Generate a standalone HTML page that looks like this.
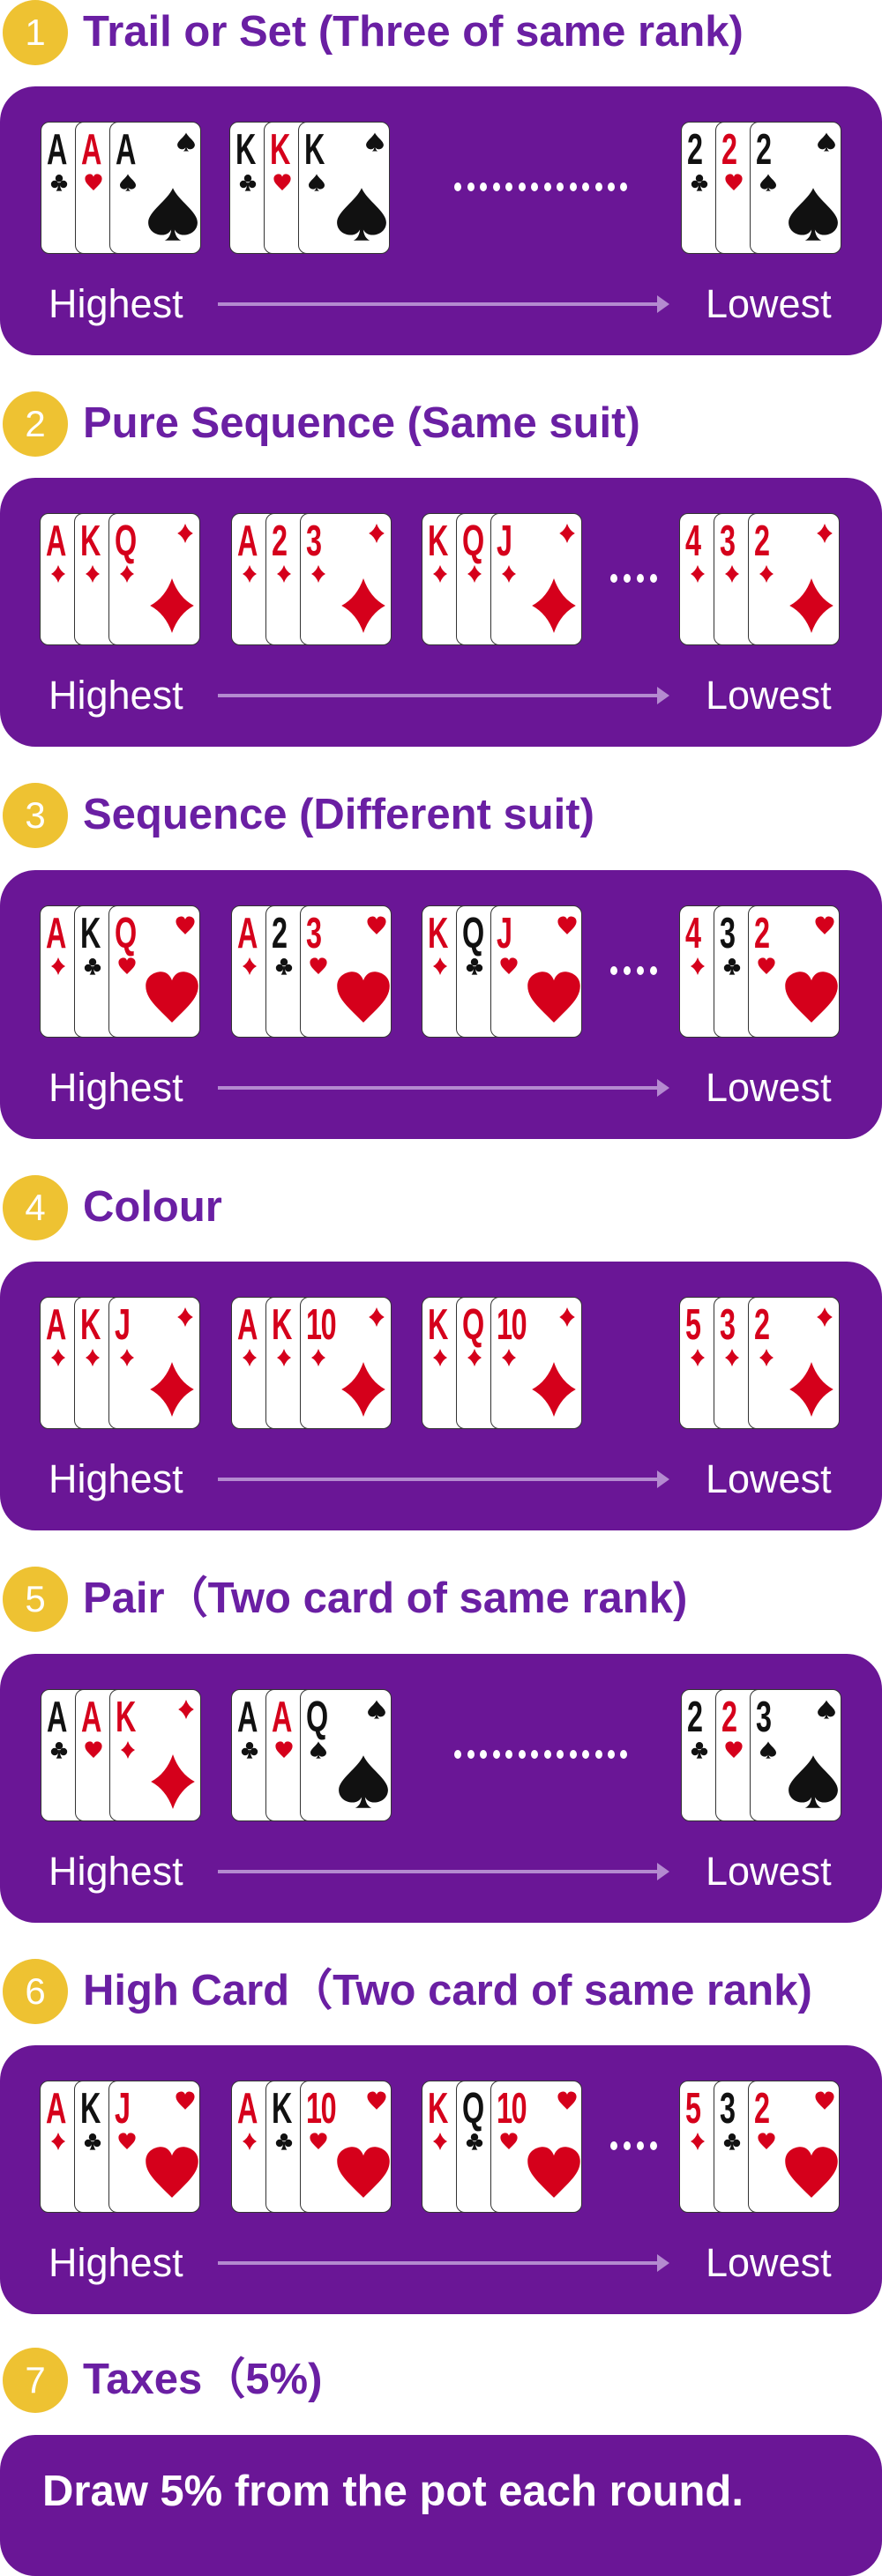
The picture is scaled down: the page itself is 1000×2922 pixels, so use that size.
<!DOCTYPE html>
<html><head><meta charset="utf-8">
<style>
*{margin:0;padding:0}
body{width:1000px;height:2882px;background:#fff;position:relative;overflow:hidden;font-family:"Liberation Sans",sans-serif}
.num{position:absolute;left:3px;width:74px;height:74px;border-radius:50%;background:#eec232;color:#fff;font-size:42px;line-height:74px;text-align:center}
.tt{position:absolute;left:94px;font-size:49px;font-weight:bold;line-height:56px;color:#6a1fa3;white-space:nowrap}
.box{position:absolute;left:0;width:1000px;height:305px;border-radius:40px;background:#6a1696}
.hi{position:absolute;left:55px;top:222px;font-size:45px;line-height:50px;color:#fff}
.lo{position:absolute;left:800px;top:222px;font-size:45px;line-height:50px;color:#fff}
.ar{position:absolute;left:247px;top:245px;width:500px;height:4px;background:#b48ad0}
.ar:after{content:"";position:absolute;left:498px;top:-8px;border-left:14px solid #b48ad0;border-top:10px solid transparent;border-bottom:10px solid transparent}
.g{position:absolute;top:40px;width:182px;height:150px}
.c{position:absolute;top:0;width:104px;height:150px;background:#fff;border:1px solid #333;border-radius:10px;box-sizing:border-box;color:#111}
.c:nth-child(2){left:39px}.c:nth-child(3){left:78px}
.red{color:#d5001b}
.r{position:absolute;left:6px;top:2px;font:bold 49px/58px "Liberation Sans",sans-serif;transform:scaleX(0.66);transform-origin:0 0;letter-spacing:-2px;white-space:nowrap}
.ss{position:absolute;left:10px;top:58px;width:20px;height:20px}
.tr{position:absolute;left:75px;top:10px;width:22px;height:24px}
.bg{position:absolute;left:40px;top:70px;width:62px;height:68px}
svg{fill:currentColor}
.dot{position:absolute;width:8px;height:10px;border-radius:50%;background:#fff}
</style></head><body>
<svg width="0" height="0" style="position:absolute">
<defs>
<symbol id="d" viewBox="0 0 100 100"><path d="M50 0Q62 35 90 50Q62 65 50 100Q38 65 10 50Q38 35 50 0Z"/></symbol>
<symbol id="h" viewBox="0 0 100 100"><path d="M50 95C20 65 2 50 2 28C2 10 18 2 30 2C40 2 47 9 50 18C53 9 60 2 70 2C82 2 98 10 98 28C98 50 80 65 50 95Z"/></symbol>
<symbol id="s" viewBox="0 0 100 100"><path d="M50 2C40 25 5 45 5 65C5 80 18 88 30 88C38 88 44 84 47 78C46 88 42 95 35 98L65 98C58 95 54 88 53 78C56 84 62 88 70 88C82 88 95 80 95 65C95 45 60 25 50 2Z"/></symbol>
<symbol id="c" viewBox="0 0 100 100"><circle cx="50" cy="26" r="21"/><circle cx="25" cy="60" r="21"/><circle cx="75" cy="60" r="21"/><path d="M46 50Q45 85 33 98L67 98Q55 85 54 50Z"/></symbol>
</defs></svg>

<!-- 1 -->
<div class="num" style="top:0">1</div>
<div class="tt" style="top:8px">Trail or Set (Three of same rank)</div>
<div class="box" style="top:98px">
<div class="g" style="left:46px">
<div class="c"><span class="r">A</span><svg class="ss"><use href="#c"/></svg></div>
<div class="c red"><span class="r">A</span><svg class="ss"><use href="#h"/></svg></div>
<div class="c"><span class="r">A</span><svg class="ss"><use href="#s"/></svg><svg class="tr"><use href="#s"/></svg><svg class="bg"><use href="#s"/></svg></div>
</div>
<div class="g" style="left:260px">
<div class="c"><span class="r">K</span><svg class="ss"><use href="#c"/></svg></div>
<div class="c red"><span class="r">K</span><svg class="ss"><use href="#h"/></svg></div>
<div class="c"><span class="r">K</span><svg class="ss"><use href="#s"/></svg><svg class="tr"><use href="#s"/></svg><svg class="bg"><use href="#s"/></svg></div>
</div>
<div class="dot" style="left:515px;top:109px"></div><div class="dot" style="left:530px;top:109px"></div><div class="dot" style="left:544px;top:109px"></div><div class="dot" style="left:559px;top:109px"></div><div class="dot" style="left:573px;top:109px"></div><div class="dot" style="left:588px;top:109px"></div><div class="dot" style="left:602px;top:109px"></div><div class="dot" style="left:617px;top:109px"></div><div class="dot" style="left:631px;top:109px"></div><div class="dot" style="left:646px;top:109px"></div><div class="dot" style="left:660px;top:109px"></div><div class="dot" style="left:675px;top:109px"></div><div class="dot" style="left:689px;top:109px"></div><div class="dot" style="left:703px;top:109px"></div>
<div class="g" style="left:772px">
<div class="c"><span class="r">2</span><svg class="ss"><use href="#c"/></svg></div>
<div class="c red"><span class="r">2</span><svg class="ss"><use href="#h"/></svg></div>
<div class="c"><span class="r">2</span><svg class="ss"><use href="#s"/></svg><svg class="tr"><use href="#s"/></svg><svg class="bg"><use href="#s"/></svg></div>
</div>
<div class="hi">Highest</div><div class="ar"></div><div class="lo">Lowest</div>
</div>

<!-- 2 -->
<div class="num" style="top:444px">2</div>
<div class="tt" style="top:452px">Pure Sequence (Same suit)</div>
<div class="box" style="top:542px">
<div class="g red" style="left:45px">
<div class="c red"><span class="r">A</span><svg class="ss"><use href="#d"/></svg></div>
<div class="c red"><span class="r">K</span><svg class="ss"><use href="#d"/></svg></div>
<div class="c red"><span class="r">Q</span><svg class="ss"><use href="#d"/></svg><svg class="tr"><use href="#d"/></svg><svg class="bg"><use href="#d"/></svg></div>
</div>
<div class="g" style="left:262px">
<div class="c red"><span class="r">A</span><svg class="ss"><use href="#d"/></svg></div>
<div class="c red"><span class="r">2</span><svg class="ss"><use href="#d"/></svg></div>
<div class="c red"><span class="r">3</span><svg class="ss"><use href="#d"/></svg><svg class="tr"><use href="#d"/></svg><svg class="bg"><use href="#d"/></svg></div>
</div>
<div class="g" style="left:478px">
<div class="c red"><span class="r">K</span><svg class="ss"><use href="#d"/></svg></div>
<div class="c red"><span class="r">Q</span><svg class="ss"><use href="#d"/></svg></div>
<div class="c red"><span class="r">J</span><svg class="ss"><use href="#d"/></svg><svg class="tr"><use href="#d"/></svg><svg class="bg"><use href="#d"/></svg></div>
</div>
<div class="dot" style="left:692px;top:109px"></div><div class="dot" style="left:707px;top:109px"></div><div class="dot" style="left:722px;top:109px"></div><div class="dot" style="left:737px;top:109px"></div>
<div class="g" style="left:770px">
<div class="c red"><span class="r">4</span><svg class="ss"><use href="#d"/></svg></div>
<div class="c red"><span class="r">3</span><svg class="ss"><use href="#d"/></svg></div>
<div class="c red"><span class="r">2</span><svg class="ss"><use href="#d"/></svg><svg class="tr"><use href="#d"/></svg><svg class="bg"><use href="#d"/></svg></div>
</div>
<div class="hi">Highest</div><div class="ar"></div><div class="lo">Lowest</div>
</div>

<!-- 3 -->
<div class="num" style="top:888px">3</div>
<div class="tt" style="top:896px">Sequence (Different suit)</div>
<div class="box" style="top:987px">
<div class="g" style="left:45px">
<div class="c red"><span class="r">A</span><svg class="ss"><use href="#d"/></svg></div>
<div class="c"><span class="r">K</span><svg class="ss"><use href="#c"/></svg></div>
<div class="c red"><span class="r">Q</span><svg class="ss"><use href="#h"/></svg><svg class="tr"><use href="#h"/></svg><svg class="bg"><use href="#h"/></svg></div>
</div>
<div class="g" style="left:262px">
<div class="c red"><span class="r">A</span><svg class="ss"><use href="#d"/></svg></div>
<div class="c"><span class="r">2</span><svg class="ss"><use href="#c"/></svg></div>
<div class="c red"><span class="r">3</span><svg class="ss"><use href="#h"/></svg><svg class="tr"><use href="#h"/></svg><svg class="bg"><use href="#h"/></svg></div>
</div>
<div class="g" style="left:478px">
<div class="c red"><span class="r">K</span><svg class="ss"><use href="#d"/></svg></div>
<div class="c"><span class="r">Q</span><svg class="ss"><use href="#c"/></svg></div>
<div class="c red"><span class="r">J</span><svg class="ss"><use href="#h"/></svg><svg class="tr"><use href="#h"/></svg><svg class="bg"><use href="#h"/></svg></div>
</div>
<div class="dot" style="left:692px;top:109px"></div><div class="dot" style="left:707px;top:109px"></div><div class="dot" style="left:722px;top:109px"></div><div class="dot" style="left:737px;top:109px"></div>
<div class="g" style="left:770px">
<div class="c red"><span class="r">4</span><svg class="ss"><use href="#d"/></svg></div>
<div class="c"><span class="r">3</span><svg class="ss"><use href="#c"/></svg></div>
<div class="c red"><span class="r">2</span><svg class="ss"><use href="#h"/></svg><svg class="tr"><use href="#h"/></svg><svg class="bg"><use href="#h"/></svg></div>
</div>
<div class="hi">Highest</div><div class="ar"></div><div class="lo">Lowest</div>
</div>

<!-- 4 -->
<div class="num" style="top:1333px">4</div>
<div class="tt" style="top:1341px">Colour</div>
<div class="box" style="top:1431px">
<div class="g" style="left:45px">
<div class="c red"><span class="r">A</span><svg class="ss"><use href="#d"/></svg></div>
<div class="c red"><span class="r">K</span><svg class="ss"><use href="#d"/></svg></div>
<div class="c red"><span class="r">J</span><svg class="ss"><use href="#d"/></svg><svg class="tr"><use href="#d"/></svg><svg class="bg"><use href="#d"/></svg></div>
</div>
<div class="g" style="left:262px">
<div class="c red"><span class="r">A</span><svg class="ss"><use href="#d"/></svg></div>
<div class="c red"><span class="r">K</span><svg class="ss"><use href="#d"/></svg></div>
<div class="c red"><span class="r">10</span><svg class="ss"><use href="#d"/></svg><svg class="tr"><use href="#d"/></svg><svg class="bg"><use href="#d"/></svg></div>
</div>
<div class="g" style="left:478px">
<div class="c red"><span class="r">K</span><svg class="ss"><use href="#d"/></svg></div>
<div class="c red"><span class="r">Q</span><svg class="ss"><use href="#d"/></svg></div>
<div class="c red"><span class="r">10</span><svg class="ss"><use href="#d"/></svg><svg class="tr"><use href="#d"/></svg><svg class="bg"><use href="#d"/></svg></div>
</div>
<div class="g" style="left:770px">
<div class="c red"><span class="r">5</span><svg class="ss"><use href="#d"/></svg></div>
<div class="c red"><span class="r">3</span><svg class="ss"><use href="#d"/></svg></div>
<div class="c red"><span class="r">2</span><svg class="ss"><use href="#d"/></svg><svg class="tr"><use href="#d"/></svg><svg class="bg"><use href="#d"/></svg></div>
</div>
<div class="hi">Highest</div><div class="ar"></div><div class="lo">Lowest</div>
</div>

<!-- 5 -->
<div class="num" style="top:1777px">5</div>
<div class="tt" style="top:1785px">Pair（Two card of same rank)</div>
<div class="box" style="top:1876px">
<div class="g" style="left:46px">
<div class="c"><span class="r">A</span><svg class="ss"><use href="#c"/></svg></div>
<div class="c red"><span class="r">A</span><svg class="ss"><use href="#h"/></svg></div>
<div class="c red"><span class="r">K</span><svg class="ss"><use href="#d"/></svg><svg class="tr"><use href="#d"/></svg><svg class="bg"><use href="#d"/></svg></div>
</div>
<div class="g" style="left:262px">
<div class="c"><span class="r">A</span><svg class="ss"><use href="#c"/></svg></div>
<div class="c red"><span class="r">A</span><svg class="ss"><use href="#h"/></svg></div>
<div class="c"><span class="r">Q</span><svg class="ss"><use href="#s"/></svg><svg class="tr"><use href="#s"/></svg><svg class="bg"><use href="#s"/></svg></div>
</div>
<div class="dot" style="left:515px;top:109px"></div><div class="dot" style="left:530px;top:109px"></div><div class="dot" style="left:544px;top:109px"></div><div class="dot" style="left:559px;top:109px"></div><div class="dot" style="left:573px;top:109px"></div><div class="dot" style="left:588px;top:109px"></div><div class="dot" style="left:602px;top:109px"></div><div class="dot" style="left:617px;top:109px"></div><div class="dot" style="left:631px;top:109px"></div><div class="dot" style="left:646px;top:109px"></div><div class="dot" style="left:660px;top:109px"></div><div class="dot" style="left:675px;top:109px"></div><div class="dot" style="left:689px;top:109px"></div><div class="dot" style="left:703px;top:109px"></div>
<div class="g" style="left:772px">
<div class="c"><span class="r">2</span><svg class="ss"><use href="#c"/></svg></div>
<div class="c red"><span class="r">2</span><svg class="ss"><use href="#h"/></svg></div>
<div class="c"><span class="r">3</span><svg class="ss"><use href="#s"/></svg><svg class="tr"><use href="#s"/></svg><svg class="bg"><use href="#s"/></svg></div>
</div>
<div class="hi">Highest</div><div class="ar"></div><div class="lo">Lowest</div>
</div>

<!-- 6 -->
<div class="num" style="top:2222px">6</div>
<div class="tt" style="top:2230px">High Card（Two card of same rank)</div>
<div class="box" style="top:2320px">
<div class="g" style="left:45px">
<div class="c red"><span class="r">A</span><svg class="ss"><use href="#d"/></svg></div>
<div class="c"><span class="r">K</span><svg class="ss"><use href="#c"/></svg></div>
<div class="c red"><span class="r">J</span><svg class="ss"><use href="#h"/></svg><svg class="tr"><use href="#h"/></svg><svg class="bg"><use href="#h"/></svg></div>
</div>
<div class="g" style="left:262px">
<div class="c red"><span class="r">A</span><svg class="ss"><use href="#d"/></svg></div>
<div class="c"><span class="r">K</span><svg class="ss"><use href="#c"/></svg></div>
<div class="c red"><span class="r">10</span><svg class="ss"><use href="#h"/></svg><svg class="tr"><use href="#h"/></svg><svg class="bg"><use href="#h"/></svg></div>
</div>
<div class="g" style="left:478px">
<div class="c red"><span class="r">K</span><svg class="ss"><use href="#d"/></svg></div>
<div class="c"><span class="r">Q</span><svg class="ss"><use href="#c"/></svg></div>
<div class="c red"><span class="r">10</span><svg class="ss"><use href="#h"/></svg><svg class="tr"><use href="#h"/></svg><svg class="bg"><use href="#h"/></svg></div>
</div>
<div class="dot" style="left:692px;top:109px"></div><div class="dot" style="left:707px;top:109px"></div><div class="dot" style="left:722px;top:109px"></div><div class="dot" style="left:737px;top:109px"></div>
<div class="g" style="left:770px">
<div class="c red"><span class="r">5</span><svg class="ss"><use href="#d"/></svg></div>
<div class="c"><span class="r">3</span><svg class="ss"><use href="#c"/></svg></div>
<div class="c red"><span class="r">2</span><svg class="ss"><use href="#h"/></svg><svg class="tr"><use href="#h"/></svg><svg class="bg"><use href="#h"/></svg></div>
</div>
<div class="hi">Highest</div><div class="ar"></div><div class="lo">Lowest</div>
</div>

<!-- 7 -->
<div class="num" style="top:2663px">7</div>
<div class="tt" style="top:2671px">Taxes（5%)</div>
<div class="box" style="top:2762px;height:160px">
<div style="position:absolute;left:48px;top:36px;font-size:49px;font-weight:bold;line-height:56px;color:#fff;white-space:nowrap">Draw 5% from the pot each round.</div>
</div>
</body></html>
